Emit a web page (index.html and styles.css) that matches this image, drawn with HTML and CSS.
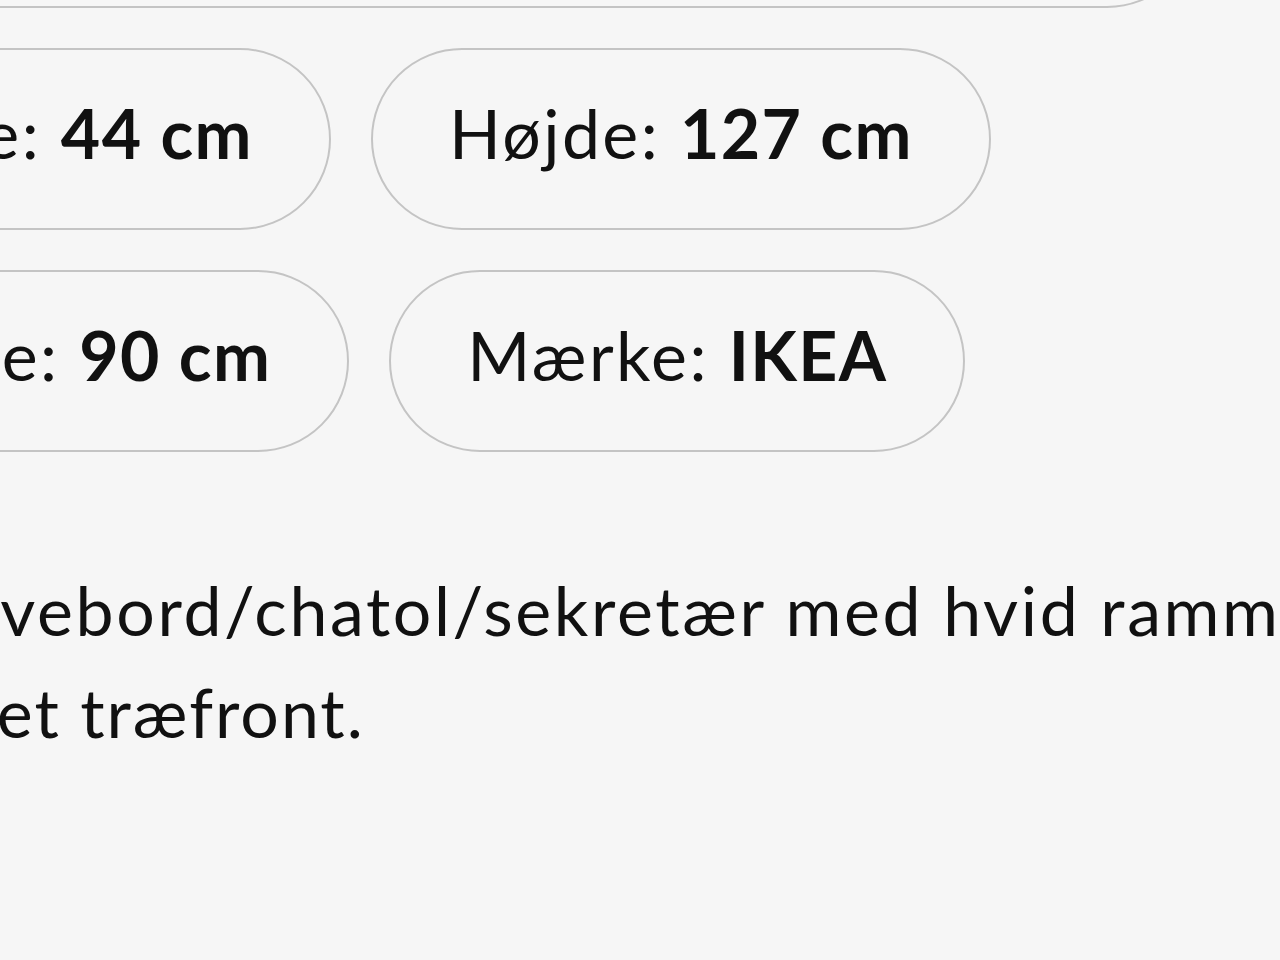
FILE: index.html
```html
<!DOCTYPE html>
<html lang="da">
<head>
<meta charset="utf-8">
<title>Skrivebord</title>
<link rel="stylesheet" href="styles.css">
</head>
<body>
<main class="listing">
  <div class="attrs">
    <div class="attr-row">
      <div class="pill pill-wide">Tilstand: <b>Brugt - men i god stand</b></div>
    </div>
    <div class="attr-row">
      <div class="pill">Dybde: <b>44 cm</b></div>
      <div class="pill">Højde: <b>127 cm</b></div>
    </div>
    <div class="attr-row">
      <div class="pill">Bredde: <b>90 cm</b></div>
      <div class="pill">Mærke: <b>IKEA</b></div>
    </div>
  </div>
  <div class="description">
    <span class="line line-1">Skrivebord/chatol/sekretær med hvid ramme og</span>
    <span class="line line-2">lakeret træfront.</span>
  </div>
</main>
</body>
</html>
```
FILE: styles.css
```css
html, body {
  margin: 0;
  padding: 0;
}
body {
  background: #f6f6f6;
  color: #111111;
  font-family: "Lato", "Noto Sans", sans-serif;
  width: 1280px;
  height: 960px;
  overflow: hidden;
}
.listing {
  margin-left: -267px;
  margin-top: -174px;
  width: 2000px;
}
.attrs {
  display: flex;
  flex-direction: column;
  gap: 40px;
}
.attr-row {
  display: flex;
  gap: 40px;
}
.pill {
  box-sizing: border-box;
  height: 182px;
  padding: 42px 76px 54px;
  border: 2px solid #c4c4c4;
  border-radius: 91px;
  font-size: 68px;
  line-height: 82px;
  letter-spacing: 2.4px;
  white-space: nowrap;
  font-weight: 400;
}
.pill b {
  font-weight: 700;
  letter-spacing: 1.4px;
}
.pill-wide {
  width: 1465px;
}
.description {
  margin-top: 107px;
  margin-left: 145px;
  font-size: 68px;
  line-height: 102px;
  letter-spacing: 2.6px;
  white-space: nowrap;
}
.line {
  display: block;
}
.line-2 {
  margin-left: -33px;
  letter-spacing: 2px;
}
```
